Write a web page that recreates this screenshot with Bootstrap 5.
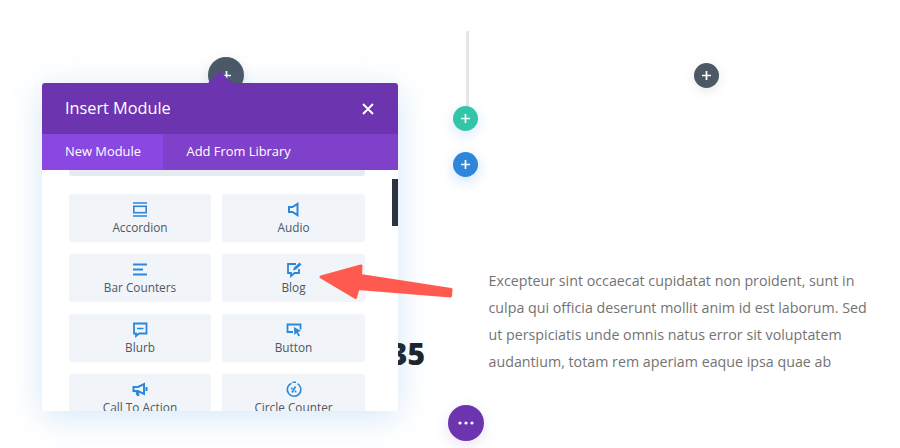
<!DOCTYPE html>
<html lang="en">
<head>
<meta charset="utf-8">
<title>Insert Module</title>
<link href="https://cdn.jsdelivr.net/npm/bootstrap@5.3.0/dist/css/bootstrap.min.css" rel="stylesheet">
<style>
html,body{height:448px;overflow:hidden;background:#fff}
body{font-family:"Open Sans","Liberation Sans",sans-serif;position:relative;width:900px}
.page-copy{padding:267px 0 0 488.500px;width:880px;font-size:14.250px;line-height:27px;color:#737373}
.page-copy p{margin:0;white-space:nowrap}
.rail{position:absolute;left:465.500px;top:31px;width:3px;height:75px;background:#e6e6e6}
.fab{position:absolute;border-radius:50%;display:flex;align-items:center;justify-content:center;border:0;padding:0}
.fab-lg{width:36px;height:36px}
.fab-sm{width:25px;height:25px}
.fab-dark{background:#4c5866;box-shadow:0 3px 12px rgba(0,0,0,.1)}
.fab-teal{background:#33c5a8;box-shadow:0 4px 14px rgba(43,135,218,.2)}
.fab-blue{background:#2e86da;box-shadow:0 4px 14px rgba(43,135,218,.25)}
.fab-purple{background:#6c34ae;box-shadow:0 4px 14px rgba(108,52,174,.15)}
.big-num{position:absolute;left:340px;top:334px;width:85px;text-align:right;font-size:30px;line-height:40px;font-weight:800;color:#1f2329}
.module-modal{position:absolute;left:41.500px;top:83px;width:356.500px;height:328px;border:0;border-radius:3px;overflow:visible;box-shadow:0 6px 34px rgba(43,135,218,.2)}
.module-modal .card-header{height:51px;background:#6c34ae;border:0;border-radius:3px 3px 0 0;padding:0 24px 0 23.500px;display:flex;align-items:center;justify-content:space-between;color:#fff;font-size:16.300px;font-weight:500;position:relative}
.caret-up{position:absolute;left:166px;top:-12px;width:0;height:0;border-left:12px solid transparent;border-right:12px solid transparent;border-bottom:12px solid #6c34ae}
.tab-strip{height:36px;background:#7f40ca;flex-wrap:nowrap}
.tab-strip .nav-link{color:#fff;font-size:12.900px;font-weight:500;height:36px;padding:0 23.500px;display:flex;align-items:center;white-space:nowrap}
.tab-strip .nav-link.active{background:#8a47e2;width:121.500px}
.tab-strip .nav-link.other{padding-left:23.500px}
.module-body{height:241px;overflow:hidden;position:relative;padding:0 33px 0 27.500px;border-radius:0 0 3px 3px}
.search-sliver{height:6px;background:#e6ebf2;border-radius:0 0 3px 3px;margin-bottom:18px}
.module-grid{display:grid;grid-template-columns:142px 143px;column-gap:11px;row-gap:12px}
.module-btn{height:48px;background:#f1f5f9;border:0;border-radius:3px;padding:7px 0 0;display:flex;flex-direction:column;align-items:center;color:#4c5866;font-size:11.800px;font-weight:400;line-height:16px}
.module-btn svg{width:18px;height:17px;margin-bottom:1px;fill:none;stroke:#2b87da;stroke-width:1.6}
.scroll-thumb{position:absolute;right:0;top:9px;width:6px;height:47px;background:#2b3440}
.callout{position:absolute;left:310px;top:255px;width:155px;height:55px}
</style>
</head>
<body>
<div class="rail"></div>
<button class="fab fab-lg fab-dark" style="left:208px;top:57px" aria-label="Add"><svg width="11" height="11" viewBox="0 0 11 11"><path d="M5.500 1v9M1 5.500h9" stroke="#fff" stroke-width="1.700"/></svg></button>
<button class="fab fab-sm fab-dark" style="left:694px;top:63px" aria-label="Add"><svg width="11" height="11" viewBox="0 0 11 11"><path d="M5.500 1v9M1 5.500h9" stroke="#fff" stroke-width="1.700"/></svg></button>
<button class="fab fab-sm fab-teal" style="left:453px;top:106px" aria-label="Add"><svg width="11" height="11" viewBox="0 0 11 11"><path d="M5.500 1v9M1 5.500h9" stroke="#fff" stroke-width="1.700"/></svg></button>
<button class="fab fab-sm fab-blue" style="left:453px;top:152px" aria-label="Add"><svg width="11" height="11" viewBox="0 0 11 11"><path d="M5.500 1v9M1 5.500h9" stroke="#fff" stroke-width="1.700"/></svg></button>
<button class="fab fab-lg fab-purple" style="left:448px;top:405px" aria-label="More"><svg width="18" height="4" viewBox="0 0 18 4"><circle cx="3" cy="2" r="1.600" fill="#fff"/><circle cx="9" cy="2" r="1.600" fill="#fff"/><circle cx="15" cy="2" r="1.600" fill="#fff"/></svg></button>

<div class="page-copy">
<p>Excepteur sint occaecat cupidatat non proident, sunt in</p>
<p>culpa qui officia deserunt mollit anim id est laborum. Sed</p>
<p>ut perspiciatis unde omnis natus error sit voluptatem</p>
<p>audantium, totam rem aperiam eaque ipsa quae ab</p>
</div>
<div class="big-num">1335</div>

<div class="card module-modal">
  <div class="card-header"><span class="caret-up"></span><span>Insert Module</span>
    <svg width="12" height="12" viewBox="0 0 12 12" aria-label="Close"><path d="M1 1l10 10M11 1L1 11" stroke="#fff" stroke-width="2"/></svg>
  </div>
  <nav class="nav tab-strip">
    <a class="nav-link active" href="#">New Module</a>
    <a class="nav-link other" href="#">Add From Library</a>
  </nav>
  <div class="module-body">
    <div class="search-sliver"></div>
    <div class="scroll-thumb"></div>
    <div class="module-grid">
      <button class="module-btn"><svg viewBox="0 0 18 17"><path d="M2 2h14M2 15h14"/><rect x="2.800" y="5.300" width="12.400" height="6.400"/></svg>Accordion</button>
      <button class="module-btn"><svg viewBox="0 0 18 17"><path d="M4 6h3.500L12.500 2.800v11.400L7.500 11H4z" stroke-width="2"/></svg>Audio</button>
      <button class="module-btn"><svg viewBox="0 0 18 17"><path d="M2 3.500h14M2 8.500h10M2 13.500h14" stroke-width="1.800"/></svg>Bar Counters</button>
      <button class="module-btn"><svg viewBox="0 0 18 17"><path d="M11 3H3v9h3v3l3.500-3H14V8" stroke-width="1.800"/><path d="M8 9.500l1-3L14.500 1.500l2 2L11 8.500z" fill="#2b87da" stroke="none"/></svg>Blog</button>
      <button class="module-btn"><svg viewBox="0 0 18 17"><path d="M3 2.500h12.500v10H8l-3 2.500v-2.500H3z" stroke-width="1.800"/><path d="M6 7.500h6.500"/></svg>Blurb</button>
      <button class="module-btn"><svg viewBox="0 0 18 17"><path d="M8 11H2.500V3.500h13v5" stroke-width="1.800"/><path d="M9 6l7 4-3 1 2 3.500-1.500 1-2-3.500-2.200 2z" fill="#2b87da" stroke="none"/></svg>Button</button>
      <button class="module-btn"><svg viewBox="0 0 18 17"><path d="M2.500 6h4.500L13 3v10L7 10H2.500z" stroke-width="2"/><path d="M5 10.500l1 4h2l-.8-4" fill="#2b87da" stroke="#2b87da" stroke-width="1"/><path d="M15.500 6v4" stroke-width="2"/></svg>Call To Action</button>
      <button class="module-btn"><svg viewBox="0 0 18 17"><path d="M6.500 2.200A6.800 6.800 0 1 0 12.500 2.600"/><path d="M7.500 1.200h3.500"/><path d="M7 11.500l3.500-6" /><circle cx="6.800" cy="7.500" r="1" fill="#2b87da" stroke="none"/><circle cx="10.500" cy="10.500" r="1" fill="#2b87da" stroke="none"/></svg>Circle Counter</button>
    </div>
  </div>
</div>

<svg class="callout" viewBox="310 255 155 55" aria-hidden="true"><path d="M321 277L361 266L360.500 275.500L451 289.500L450.500 296L358 288.500L355.500 297.500Z" fill="#ff5a4f" stroke="#ff5a4f" stroke-width="3" stroke-linejoin="round"/></svg>
<script src="https://cdn.jsdelivr.net/npm/bootstrap@5.3.0/dist/js/bootstrap.bundle.min.js"></script>
</body>
</html>
